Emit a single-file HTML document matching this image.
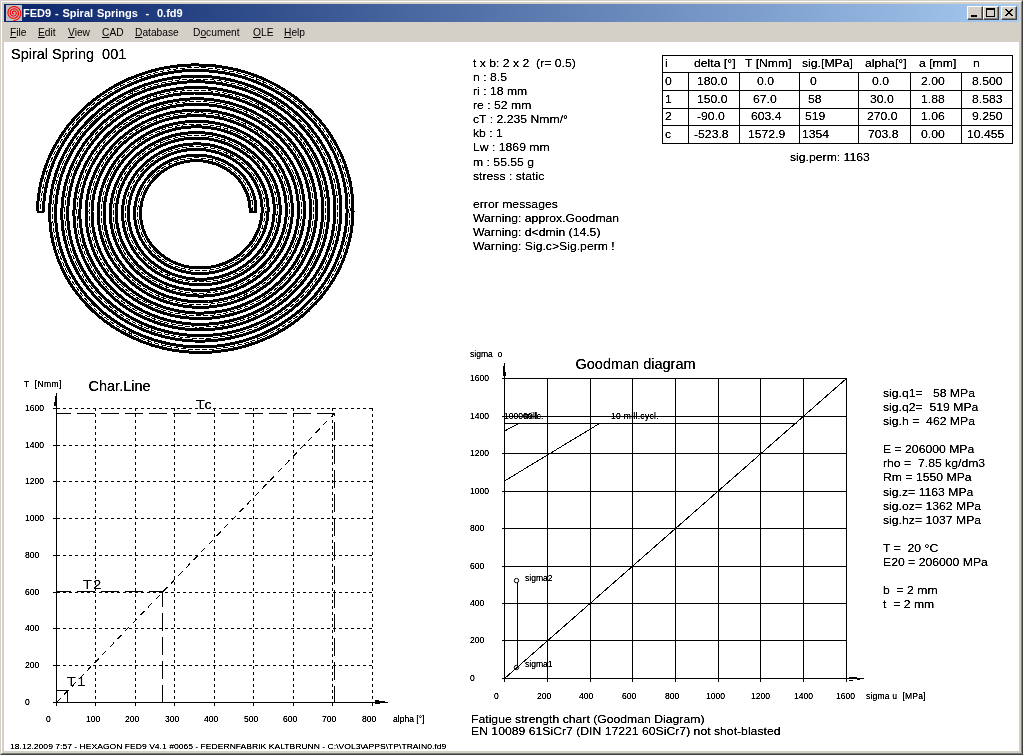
<!DOCTYPE html>
<html><head><meta charset="utf-8"><title>FED9 - Spiral Springs - 0.fd9</title>
<style>
html,body{margin:0;padding:0;}
body{width:1023px;height:755px;overflow:hidden;background:#d4d0c8;font-family:"Liberation Sans", sans-serif;position:relative;}
#win{position:absolute;left:0;top:0;width:1023px;height:755px;box-sizing:border-box;background:#d4d0c8;
 border-top:1px solid #d4d0c8;border-left:1px solid #d4d0c8;border-right:1px solid #404040;border-bottom:1px solid #404040;}
#win2{position:absolute;left:1px;top:1px;width:1021px;height:753px;box-sizing:border-box;
 border-top:1px solid #fff;border-left:1px solid #fff;border-right:1px solid #808080;border-bottom:1px solid #808080;}
#title{position:absolute;left:4px;top:4px;width:1015px;height:18px;background:linear-gradient(to right,#0a246a,#a6caf0);}
#title .cap{position:absolute;left:19px;top:0;height:18px;line-height:18px;font-size:11px;font-weight:bold;color:#fff;white-space:pre;letter-spacing:0;word-spacing:0.8px;}
.btn{position:absolute;top:2px;width:16px;height:14px;box-sizing:border-box;background:#d4d0c8;
 border-top:1px solid #fff;border-left:1px solid #fff;border-right:1px solid #404040;border-bottom:1px solid #404040;}
.btn i{position:absolute;left:0;top:0;right:0;bottom:0;border-right:1px solid #808080;border-bottom:1px solid #808080;}
#menu{position:absolute;left:4px;top:23px;width:1015px;height:19px;font-size:11px;line-height:19px;color:#000;}
#menu span{position:absolute;top:0;transform:scaleX(0.93);transform-origin:0 50%;}
#menu u{text-decoration:underline;}
#client{position:absolute;left:4px;top:42px;width:1015px;height:709px;background:#fff;}
#cv{position:absolute;left:0;top:0;width:1023px;height:755px;}
.t{position:absolute;white-space:nowrap;color:#000;transform-origin:0 50%;}
.sm{font-weight:normal;}
.ft{font-weight:normal;}
#tx{position:absolute;left:0;top:0;width:1023px;height:755px;will-change:transform;filter:url(#thr);}
#title,#menu{will-change:transform;}
svg{position:absolute;left:0;top:0;}
svg *{shape-rendering:crispEdges;}
svg .aa{shape-rendering:auto;}
</style></head><body>
<div id="win"></div><div id="win2"></div>
<div id="title">
 <svg width="16" height="16" style="left:2px;top:1px" viewBox="0 0 16 16"><rect width="16" height="16" fill="#c0c0c0"/>
 <path d="M7.80 8.80 L7.67 8.85 L7.52 8.87 L7.36 8.86 L7.20 8.83 L7.04 8.76 L6.88 8.67 L6.74 8.54 L6.61 8.39 L6.51 8.20 L6.44 8.00 L6.40 7.78 L6.40 7.55 L6.44 7.31 L6.52 7.07 L6.64 6.84 L6.80 6.63 L7.01 6.44 L7.24 6.28 L7.51 6.16 L7.80 6.08 L8.11 6.05 L8.43 6.07 L8.75 6.14 L9.06 6.27 L9.35 6.45 L9.62 6.68 L9.86 6.95 L10.05 7.27 L10.19 7.62 L10.28 8.00 L10.30 8.40 L10.26 8.80 L10.15 9.20 L9.98 9.59 L9.75 9.95 L9.45 10.27 L9.10 10.55 L8.70 10.78 L8.27 10.94 L7.80 11.03 L7.32 11.05 L6.83 10.99 L6.35 10.85 L5.89 10.63 L5.46 10.34 L5.07 9.98 L4.75 9.55 L4.49 9.08 L4.31 8.55 L4.21 8.00 L4.20 7.43 L4.28 6.86 L4.45 6.29 L4.71 5.76 L5.06 5.26 L5.49 4.82 L5.99 4.45 L6.55 4.16 L7.16 3.96 L7.80 3.85 L8.46 3.85 L9.12 3.95 L9.76 4.15 L10.37 4.46 L10.93 4.87 L11.43 5.36 L11.85 5.94 L12.17 6.58 L12.40 7.27 L12.51 8.00 L12.51 8.75 L12.38 9.49 L12.14 10.21 L11.79 10.90 L11.33 11.53 L10.76 12.08 L10.11 12.54 L9.39 12.90 L8.62 13.15 L7.80 13.27 L6.97 13.26 L6.14 13.12 L5.33 12.84 L4.57 12.44 L3.88 11.92 L3.27 11.29 L2.76 10.57 L2.37 9.77 L2.10 8.90 L1.97 8.00 L1.99 7.08 L2.15 6.17 L2.46 5.28 L2.91 4.44 L3.48 3.68 L4.18 3.02 L4.98 2.46 L5.86 2.04 L6.81 1.75 L7.80 1.62 L8.81 1.64 L9.81 1.82 L10.77 2.16 L11.68 2.66 L12.51 3.29 L13.24 4.05 L13.84 4.92 L14.30 5.89 L14.60 6.92 L14.74 8.00 L14.71 9.09 L14.51 10.18 L14.13 11.23 L13.60 12.21 L12.91 13.11 L12.08 13.89 L11.13 14.53 L10.08 15.03 L8.96 15.35 L7.80 15.50" fill="none" stroke="#f00" stroke-width="1.15" stroke-linecap="round" style="shape-rendering:auto"/></svg>
 <div class="cap">FED9 - Spiral Springs  -  0.fd9</div>
 <div class="btn" style="left:963px"><i></i><svg width="14" height="12"><rect x="3" y="8" width="6" height="2" fill="#000"/></svg></div>
 <div class="btn" style="left:979px"><i></i><svg width="14" height="12"><rect x="2.5" y="1.5" width="8" height="8" fill="none" stroke="#000"/><rect x="2" y="1" width="9" height="2" fill="#000"/></svg></div>
 <div class="btn" style="left:997px"><i></i><svg width="14" height="12"><path d="M3 2 L10 9 M4 2 L11 9 M10 2 L3 9 M11 2 L4 9" stroke="#000" stroke-width="1" fill="none" style="shape-rendering:auto"/></svg></div>
</div>
<div id="menu">
 <span style="left:6px"><u>F</u>ile</span><span style="left:34px"><u>E</u>dit</span><span style="left:64px"><u>V</u>iew</span>
 <span style="left:98px"><u>C</u>AD</span><span style="left:131px"><u>D</u>atabase</span><span style="left:189px">D<u>o</u>cument</span>
 <span style="left:249px"><u>O</u>LE</span><span style="left:280px"><u>H</u>elp</span>
</div>
<div id="client"></div>
<svg width="0" height="0" style="position:absolute"><defs><filter id="thr" x="0" y="0" width="100%" height="100%" color-interpolation-filters="sRGB"><feComponentTransfer><feFuncA type="linear" slope="1.8" intercept="-0.15"/></feComponentTransfer></filter></defs></svg>
<svg id="cv" width="1023" height="755" viewBox="0 0 1023 755">
<path d="M250.0 211.5 L250.0 208.1 L249.7 204.8 L249.2 201.4 L248.5 198.1 L247.5 194.9 L246.2 191.7 L244.7 188.6 L243.0 185.5 L241.1 182.6 L238.9 179.8 L236.5 177.2 L233.9 174.7 L231.2 172.4 L228.2 170.3 L225.1 168.3 L221.9 166.6 L218.5 165.0 L215.0 163.7 L211.4 162.6 L207.7 161.8 L204.0 161.1 L200.2 160.8 L196.4 160.7 L192.6 160.8 L188.7 161.1 L185.0 161.8 L181.2 162.6 L177.5 163.7 L173.9 165.1 L170.4 166.7 L167.1 168.5 L163.8 170.5 L160.8 172.8 L157.8 175.2 L155.1 177.8 L152.6 180.6 L150.3 183.6 L148.2 186.7 L146.3 190.0 L144.7 193.4 L143.3 196.9 L142.2 200.4 L141.4 204.1 L140.8 207.8 L140.6 211.5 L140.6 215.3 L140.9 219.0 L141.4 222.7 L142.3 226.4 L143.4 230.1 L144.8 233.6 L146.5 237.1 L148.4 240.5 L150.6 243.7 L153.0 246.8 L155.7 249.7 L158.6 252.5 L161.7 255.0 L165.0 257.4 L168.4 259.6 L172.0 261.5 L175.8 263.2 L179.7 264.7 L183.7 265.9 L187.8 266.8 L192.0 267.5 L196.2 267.9 L200.4 268.0 L204.7 267.8 L208.9 267.4 L213.1 266.7 L217.3 265.7 L221.3 264.5 L225.3 263.0 L229.2 261.2 L232.9 259.2 L236.5 256.9 L239.9 254.4 L243.1 251.7 L246.1 248.8 L248.9 245.7 L251.5 242.4 L253.8 238.9 L255.8 235.3 L257.6 231.6 L259.1 227.7 L260.3 223.7 L261.2 219.7 L261.8 215.6 L262.1 211.5 L262.1 207.4 L261.7 203.2 L261.1 199.1 L260.1 195.0 L258.9 191.0 L257.3 187.1 L255.5 183.3 L253.3 179.6 L250.9 176.0 L248.2 172.6 L245.3 169.4 L242.1 166.3 L238.7 163.5 L235.0 160.9 L231.2 158.5 L227.2 156.4 L223.1 154.6 L218.8 153.0 L214.4 151.7 L209.8 150.7 L205.3 149.9 L200.6 149.5 L196.0 149.4 L191.3 149.6 L186.6 150.0 L182.0 150.8 L177.5 151.9 L173.0 153.3 L168.6 155.0 L164.4 156.9 L160.3 159.1 L156.4 161.6 L152.6 164.4 L149.1 167.4 L145.8 170.6 L142.8 174.0 L140.0 177.6 L137.4 181.4 L135.2 185.4 L133.3 189.5 L131.7 193.7 L130.4 198.1 L129.4 202.5 L128.7 207.0 L128.4 211.5 L128.5 216.0 L128.8 220.6 L129.6 225.1 L130.6 229.5 L132.0 233.9 L133.7 238.2 L135.8 242.4 L138.1 246.4 L140.8 250.3 L143.7 254.0 L147.0 257.6 L150.5 260.9 L154.2 263.9 L158.2 266.8 L162.4 269.3 L166.7 271.6 L171.3 273.7 L176.0 275.4 L180.8 276.8 L185.7 277.9 L190.7 278.7 L195.8 279.1 L200.8 279.3 L205.9 279.1 L211.0 278.5 L216.1 277.6 L221.0 276.5 L225.9 274.9 L230.6 273.1 L235.3 271.0 L239.7 268.5 L244.0 265.8 L248.0 262.8 L251.9 259.6 L255.4 256.0 L258.8 252.3 L261.8 248.4 L264.5 244.2 L266.9 239.9 L269.0 235.4 L270.8 230.8 L272.2 226.1 L273.2 221.3 L273.9 216.4 L274.2 211.5 L274.2 206.6 L273.8 201.6 L273.0 196.8 L271.8 191.9 L270.3 187.2 L268.4 182.5 L266.2 178.0 L263.6 173.6 L260.7 169.4 L257.5 165.3 L254.0 161.5 L250.2 157.9 L246.1 154.6 L241.8 151.6 L237.3 148.8 L232.5 146.3 L227.6 144.1 L222.5 142.3 L217.3 140.7 L212.0 139.5 L206.5 138.7 L201.1 138.2 L195.5 138.1 L190.0 138.3 L184.5 138.9 L179.1 139.9 L173.7 141.2 L168.4 142.8 L163.3 144.8 L158.3 147.1 L153.5 149.8 L148.9 152.7 L144.5 156.0 L140.4 159.5 L136.5 163.3 L132.9 167.4 L129.7 171.7 L126.7 176.1 L124.1 180.8 L121.9 185.7 L120.0 190.6 L118.5 195.7 L117.4 200.9 L116.6 206.2 L116.3 211.5 L116.4 216.8 L116.8 222.1 L117.7 227.4 L119.0 232.6 L120.6 237.8 L122.6 242.8 L125.1 247.7 L127.8 252.4 L131.0 257.0 L134.4 261.3 L138.2 265.4 L142.3 269.2 L146.7 272.8 L151.4 276.1 L156.3 279.1 L161.4 281.8 L166.7 284.1 L172.2 286.1 L177.8 287.7 L183.6 289.0 L189.4 289.9 L195.3 290.4 L201.3 290.5 L207.2 290.3 L213.1 289.6 L219.0 288.6 L224.8 287.2 L230.4 285.4 L236.0 283.3 L241.3 280.7 L246.5 277.9 L251.4 274.7 L256.2 271.2 L260.6 267.4 L264.7 263.3 L268.6 258.9 L272.1 254.3 L275.2 249.5 L278.0 244.5 L280.4 239.3 L282.4 233.9 L284.1 228.4 L285.3 222.9 L286.0 217.2 L286.4 211.5 L286.3 205.8 L285.8 200.1 L284.8 194.4 L283.5 188.8 L281.7 183.3 L279.5 177.9 L276.9 172.7 L273.9 167.6 L270.5 162.7 L266.8 158.1 L262.7 153.7 L258.3 149.6 L253.6 145.7 L248.6 142.2 L243.3 139.0 L237.9 136.1 L232.2 133.6 L226.3 131.5 L220.2 129.8 L214.1 128.4 L207.8 127.5 L201.5 127.0 L195.1 126.8 L188.8 127.1 L182.4 127.8 L176.1 128.9 L170.0 130.5 L163.9 132.4 L158.0 134.7 L152.2 137.4 L146.7 140.4 L141.4 143.9 L136.4 147.6 L131.6 151.7 L127.2 156.1 L123.1 160.7 L119.4 165.7 L116.0 170.8 L113.0 176.2 L110.5 181.8 L108.3 187.5 L106.6 193.4 L105.3 199.4 L104.5 205.4 L104.2 211.5 L104.2 217.6 L104.8 223.7 L105.8 229.8 L107.3 235.7 L109.2 241.6 L111.6 247.4 L114.3 253.0 L117.5 258.4 L121.2 263.6 L125.1 268.5 L129.5 273.2 L134.2 277.6 L139.3 281.7 L144.6 285.5 L150.2 288.9 L156.1 291.9 L162.2 294.6 L168.5 296.8 L174.9 298.7 L181.5 300.1 L188.2 301.1 L194.9 301.7 L201.7 301.8 L208.5 301.5 L215.2 300.7 L221.9 299.5 L228.5 297.9 L235.0 295.9 L241.3 293.4 L247.4 290.5 L253.3 287.2 L258.9 283.6 L264.3 279.6 L269.3 275.2 L274.0 270.5 L278.4 265.6 L282.4 260.3 L286.0 254.8 L289.1 249.1 L291.8 243.1 L294.1 237.0 L295.9 230.8 L297.3 224.4 L298.1 218.0 L298.5 211.5 L298.4 205.0 L297.8 198.5 L296.7 192.1 L295.2 185.7 L293.1 179.4 L290.6 173.3 L287.6 167.4 L284.2 161.6 L280.4 156.1 L276.1 150.8 L271.5 145.9 L266.4 141.2 L261.1 136.8 L255.4 132.8 L249.4 129.2 L243.2 126.0 L236.7 123.2 L230.0 120.8 L223.2 118.8 L216.2 117.3 L209.1 116.3 L201.9 115.7 L194.7 115.6 L187.5 115.9 L180.3 116.7 L173.2 118.0 L166.2 119.7 L159.3 121.9 L152.7 124.5 L146.2 127.6 L139.9 131.1 L133.9 135.0 L128.3 139.2 L122.9 143.9 L117.9 148.8 L113.3 154.1 L109.1 159.7 L105.3 165.5 L101.9 171.6 L99.1 177.9 L96.7 184.4 L94.7 191.0 L93.3 197.8 L92.4 204.6 L92.0 211.5 L92.1 218.4 L92.8 225.3 L93.9 232.1 L95.6 238.9 L97.8 245.5 L100.5 252.0 L103.6 258.3 L107.2 264.4 L111.3 270.2 L115.8 275.8 L120.8 281.1 L126.1 286.0 L131.8 290.6 L137.8 294.8 L144.1 298.7 L150.8 302.1 L157.6 305.0 L164.7 307.6 L172.0 309.6 L179.4 311.2 L186.9 312.3 L194.5 313.0 L202.1 313.1 L209.7 312.7 L217.3 311.8 L224.9 310.5 L232.3 308.6 L239.5 306.3 L246.6 303.5 L253.5 300.3 L260.1 296.6 L266.4 292.5 L272.4 288.0 L278.1 283.1 L283.3 277.8 L288.2 272.2 L292.7 266.3 L296.7 260.1 L300.2 253.7 L303.2 247.0 L305.8 240.1 L307.8 233.1 L309.3 226.0 L310.2 218.8 L310.7 211.5 L310.5 204.2 L309.8 196.9 L308.6 189.7 L306.8 182.6 L304.5 175.6 L301.7 168.7 L298.3 162.1 L294.5 155.6 L290.2 149.5 L285.4 143.6 L280.2 138.0 L274.6 132.8 L268.6 128.0 L262.2 123.5 L255.5 119.5 L248.5 115.9 L241.2 112.7 L233.8 110.1 L226.1 107.9 L218.3 106.2 L210.3 105.1 L202.3 104.4 L194.3 104.3 L186.2 104.7 L178.2 105.6 L170.3 107.0 L162.5 109.0 L154.8 111.5 L147.3 114.4 L140.1 117.8 L133.1 121.7 L126.5 126.1 L120.1 130.8 L114.2 136.0 L108.6 141.6 L103.5 147.5 L98.8 153.7 L94.6 160.3 L90.9 167.1 L87.7 174.1 L85.0 181.3 L82.9 188.7 L81.3 196.2 L80.3 203.8 L79.9 211.5 L80.0 219.2 L80.8 226.8 L82.1 234.5 L83.9 242.0 L86.4 249.3 L89.4 256.6 L92.9 263.6 L97.0 270.3 L101.5 276.8 L106.5 283.0 L112.0 288.9 L118.0 294.4 L124.3 299.5 L131.0 304.2 L138.1 308.4 L145.4 312.2 L153.1 315.5 L161.0 318.3 L169.0 320.6 L177.3 322.3 L185.6 323.6 L194.1 324.2 L202.5 324.4 L211.0 323.9 L219.4 323.0 L227.8 321.4 L236.0 319.4 L244.1 316.8 L251.9 313.7 L259.5 310.1 L266.9 305.9 L273.9 301.4 L280.5 296.3 L286.8 290.9 L292.6 285.0 L298.0 278.8 L303.0 272.3 L307.4 265.4 L311.3 258.2 L314.7 250.8 L317.5 243.2 L319.7 235.5 L321.3 227.6 L322.4 219.6 L322.8 211.5 L322.6 203.4 L321.9 195.4 L320.5 187.4 L318.5 179.5 L315.9 171.7 L312.8 164.1 L309.1 156.8 L304.8 149.7 L300.0 142.8 L294.7 136.3 L288.9 130.2 L282.7 124.4 L276.0 119.1 L269.0 114.1 L261.6 109.7 L253.8 105.7 L245.8 102.3 L237.5 99.3 L229.0 96.9 L220.4 95.1 L211.6 93.8 L202.7 93.1 L193.8 93.0 L184.9 93.5 L176.1 94.5 L167.3 96.1 L158.7 98.3 L150.2 101.0 L142.0 104.3 L134.0 108.1 L126.3 112.4 L119.0 117.2 L112.0 122.5 L105.4 128.2 L99.3 134.3 L93.7 140.9 L88.5 147.7 L83.9 155.0 L79.8 162.5 L76.2 170.2 L73.3 178.2 L71.0 186.4 L69.3 194.7 L68.2 203.0 L67.7 211.5 L67.9 220.0 L68.7 228.4 L70.2 236.8 L72.3 245.1 L75.0 253.2 L78.3 261.1 L82.2 268.9 L86.7 276.3 L91.7 283.5 L97.2 290.3 L103.3 296.7 L109.9 302.8 L116.8 308.4 L124.2 313.5 L132.0 318.2 L140.1 322.3 L148.5 326.0 L157.2 329.0 L166.1 331.5 L175.2 333.4 L184.4 334.8 L193.6 335.5 L203.0 335.6 L212.3 335.1 L221.6 334.1 L230.7 332.4 L239.8 330.1 L248.6 327.2 L257.3 323.8 L265.6 319.8 L273.6 315.3 L281.3 310.3 L288.6 304.7 L295.5 298.7 L301.9 292.3 L307.9 285.5 L313.3 278.2 L318.1 270.7 L322.4 262.8 L326.1 254.7 L329.1 246.4 L331.6 237.8 L333.3 229.1 L334.5 220.3 L334.9 211.5 L334.7 202.6 L333.9 193.8 L332.3 185.0 L330.2 176.4 L327.3 167.9 L323.9 159.6 L319.8 151.5 L315.1 143.7 L309.8 136.2 L304.0 129.1 L297.7 122.4 L290.8 116.0 L283.5 110.2 L275.8 104.8 L267.6 99.9 L259.1 95.6 L250.3 91.8 L241.3 88.6 L232.0 86.0 L222.5 84.0 L212.9 82.6 L203.2 81.9 L193.4 81.7 L183.7 82.2 L174.0 83.4 L164.4 85.2 L155.0 87.5 L145.7 90.5 L136.7 94.1 L128.0 98.3 L119.6 103.0 L111.5 108.3 L103.9 114.1 L96.7 120.3 L90.0 127.1 L83.8 134.2 L78.2 141.8 L73.1 149.7 L68.7 157.9 L64.8 166.4 L61.6 175.1 L59.1 184.0 L57.3 193.1 L56.1 202.3 L55.6 211.5 L55.8 220.8 L56.7 230.0 L58.3 239.1 L60.6 248.2 L63.6 257.1 L67.2 265.7 L71.5 274.2 L76.4 282.3 L81.9 290.1 L87.9 297.5 L94.6 304.6 L101.7 311.2 L109.4 317.3 L117.4 322.9 L125.9 328.0 L134.8 332.5 L144.0 336.4 L153.5 339.8 L163.2 342.5 L173.1 344.6 L183.1 346.0 L193.2 346.8 L203.4 346.9 L213.6 346.4 L223.7 345.2 L233.7 343.3 L243.5 340.8 L253.2 337.7 L262.6 333.9 L271.7 329.6 L280.4 324.6 L288.8 319.1 L296.8 313.1 L304.3 306.6 L311.2 299.6 L317.7 292.1 L323.6 284.2 L328.8 276.0 L333.5 267.4 L337.5 258.6 L340.8 249.5 L343.4 240.2 L345.4 230.7 L346.6 221.1 L347.1 211.5 L346.8 201.8 L345.9 192.2 L344.2 182.7 L341.8 173.3 L338.7 164.0 L335.0 155.0 L330.5 146.2 L325.4 137.7 L319.6 129.6 L313.3 121.8 L306.4 114.5 L298.9 107.7 L291.0 101.3 L282.6 95.4 L273.7 90.2 L264.5 85.5 L254.9 81.4 L245.0 77.9 L234.9 75.1 L224.6 72.9 L214.1 71.4 L203.6 70.6 L193.0 70.5 L182.4 71.0 L171.9 72.3 L161.5 74.2 L151.2 76.8 L141.2 80.1 L131.4 84.0 L121.9 88.5 L112.8 93.7 L104.0 99.4 L95.8 105.7 L88.0 112.5 L80.7 119.8 L74.0 127.6 L67.9 135.8 L62.4 144.4 L57.6 153.3 L53.4 162.5 L50.0 172.0 L47.2 181.7 L45.2 191.5 L44.0 201.5 L43.5 211.5" fill="none" stroke="#000" stroke-width="3" stroke-linejoin="round"/>
<path d="M255.9 211.5 L255.9 207.8 L255.6 204.0 L255.0 200.3 L254.2 196.6 L253.1 193.0 L251.7 189.4 L250.0 186.0 L248.1 182.6 L245.9 179.4 L243.5 176.3 L240.8 173.4 L237.9 170.6 L234.8 168.0 L231.6 165.7 L228.1 163.5 L224.5 161.6 L220.7 159.9 L216.9 158.5 L212.9 157.3 L208.8 156.3 L204.6 155.7 L200.4 155.3 L196.2 155.1 L191.9 155.3 L187.7 155.7 L183.5 156.4 L179.4 157.4 L175.3 158.6 L171.3 160.1 L167.5 161.9 L163.7 163.9 L160.2 166.2 L156.8 168.7 L153.6 171.4 L150.6 174.3 L147.8 177.4 L145.2 180.7 L142.9 184.1 L140.9 187.7 L139.1 191.5 L137.6 195.3 L136.4 199.3 L135.5 203.3 L134.9 207.4 L134.6 211.5 L134.6 215.6 L135.0 219.8 L135.6 223.9 L136.6 227.9 L137.8 231.9 L139.4 235.9 L141.2 239.7 L143.4 243.4 L145.8 246.9 L148.5 250.3 L151.4 253.6 L154.6 256.6 L158.0 259.4 L161.6 262.0 L165.5 264.4 L169.4 266.5 L173.6 268.3 L177.9 269.9 L182.3 271.2 L186.8 272.2 L191.3 273.0 L196.0 273.4 L200.6 273.5 L205.3 273.3 L209.9 272.9 L214.6 272.1 L219.1 271.0 L223.6 269.6 L227.9 267.9 L232.2 266.0 L236.2 263.8 L240.2 261.3 L243.9 258.5 L247.4 255.6 L250.7 252.3 L253.7 248.9 L256.5 245.3 L259.0 241.5 L261.3 237.6 L263.2 233.4 L264.8 229.2 L266.1 224.9 L267.1 220.5 L267.7 216.0 L268.0 211.5 L268.0 207.0 L267.6 202.4 L266.9 197.9 L265.9 193.5 L264.5 189.1 L262.8 184.8 L260.7 180.7 L258.4 176.6 L255.7 172.7 L252.8 169.0 L249.5 165.5 L246.1 162.2 L242.3 159.2 L238.4 156.3 L234.2 153.8 L229.8 151.5 L225.3 149.4 L220.6 147.7 L215.8 146.3 L210.9 145.2 L205.9 144.4 L200.8 144.0 L195.8 143.9 L190.7 144.1 L185.6 144.6 L180.6 145.5 L175.6 146.6 L170.8 148.2 L166.0 150.0 L161.4 152.1 L157.0 154.6 L152.7 157.3 L148.7 160.3 L144.8 163.5 L141.3 167.0 L137.9 170.8 L134.9 174.7 L132.2 178.8 L129.8 183.2 L127.7 187.6 L125.9 192.2 L124.5 196.9 L123.5 201.7 L122.8 206.6 L122.5 211.5 L122.5 216.4 L123.0 221.3 L123.7 226.2 L124.9 231.1 L126.4 235.8 L128.3 240.5 L130.5 245.0 L133.1 249.4 L136.0 253.6 L139.2 257.6 L142.7 261.4 L146.5 265.0 L150.5 268.3 L154.8 271.4 L159.4 274.1 L164.1 276.6 L169.0 278.8 L174.1 280.6 L179.3 282.2 L184.7 283.3 L190.1 284.2 L195.6 284.7 L201.1 284.8 L206.6 284.5 L212.1 284.0 L217.5 283.0 L222.9 281.7 L228.1 280.1 L233.2 278.1 L238.2 275.8 L243.0 273.1 L247.6 270.2 L252.0 266.9 L256.1 263.4 L260.0 259.6 L263.6 255.6 L266.8 251.3 L269.8 246.8 L272.4 242.1 L274.6 237.3 L276.5 232.3 L278.0 227.2 L279.1 222.1 L279.9 216.8 L280.2 211.5 L280.1 206.2 L279.7 200.9 L278.8 195.6 L277.5 190.4 L275.9 185.3 L273.8 180.2 L271.4 175.4 L268.7 170.7 L265.5 166.1 L262.1 161.8 L258.3 157.7 L254.2 153.8 L249.8 150.3 L245.1 147.0 L240.3 144.0 L235.1 141.3 L229.8 139.0 L224.4 137.0 L218.7 135.4 L213.0 134.1 L207.2 133.2 L201.3 132.7 L195.3 132.6 L189.4 132.8 L183.5 133.5 L177.6 134.5 L171.9 135.9 L166.2 137.7 L160.7 139.8 L155.3 142.4 L150.2 145.2 L145.2 148.4 L140.5 151.9 L136.1 155.7 L132.0 159.8 L128.1 164.1 L124.6 168.7 L121.5 173.5 L118.7 178.6 L116.3 183.8 L114.3 189.1 L112.7 194.6 L111.5 200.2 L110.7 205.8 L110.3 211.5 L110.4 217.2 L110.9 222.9 L111.9 228.6 L113.2 234.2 L115.0 239.7 L117.2 245.0 L119.8 250.3 L122.8 255.3 L126.2 260.2 L129.9 264.8 L134.0 269.2 L138.4 273.4 L143.1 277.2 L148.1 280.7 L153.3 283.9 L158.8 286.8 L164.5 289.2 L170.4 291.4 L176.4 293.1 L182.6 294.5 L188.8 295.4 L195.1 295.9 L201.5 296.1 L207.8 295.8 L214.2 295.1 L220.4 294.0 L226.6 292.4 L232.7 290.5 L238.6 288.2 L244.3 285.5 L249.8 282.5 L255.1 279.1 L260.1 275.3 L264.9 271.2 L269.3 266.9 L273.4 262.2 L277.1 257.3 L280.5 252.1 L283.5 246.7 L286.0 241.2 L288.2 235.4 L289.9 229.6 L291.1 223.6 L292.0 217.6 L292.3 211.5 L292.2 205.4 L291.7 199.3 L290.7 193.3 L289.2 187.3 L287.3 181.4 L284.9 175.7 L282.2 170.1 L279.0 164.7 L275.3 159.5 L271.4 154.5 L267.0 149.9 L262.3 145.5 L257.3 141.4 L251.9 137.6 L246.3 134.2 L240.5 131.2 L234.4 128.5 L228.1 126.3 L221.7 124.4 L215.1 123.0 L208.4 122.0 L201.7 121.4 L194.9 121.3 L188.1 121.6 L181.4 122.4 L174.7 123.6 L168.1 125.2 L161.7 127.2 L155.4 129.7 L149.3 132.6 L143.4 135.9 L137.8 139.5 L132.4 143.5 L127.4 147.9 L122.7 152.5 L118.3 157.5 L114.3 162.7 L110.8 168.2 L107.6 174.0 L104.9 179.9 L102.6 186.0 L100.8 192.2 L99.4 198.6 L98.6 205.0 L98.2 211.5 L98.3 218.0 L98.9 224.5 L100.0 230.9 L101.6 237.3 L103.6 243.5 L106.1 249.6 L109.1 255.6 L112.5 261.3 L116.3 266.8 L120.6 272.1 L125.2 277.1 L130.2 281.7 L135.6 286.1 L141.3 290.1 L147.2 293.7 L153.5 296.9 L159.9 299.7 L166.6 302.1 L173.5 304.1 L180.5 305.6 L187.5 306.6 L194.7 307.2 L201.9 307.3 L209.1 307.0 L216.3 306.2 L223.4 304.9 L230.4 303.2 L237.2 301.0 L243.9 298.4 L250.4 295.3 L256.6 291.8 L262.6 287.9 L268.3 283.7 L273.6 279.1 L278.6 274.1 L283.2 268.8 L287.4 263.2 L291.2 257.4 L294.5 251.3 L297.4 245.0 L299.8 238.6 L301.7 231.9 L303.2 225.2 L304.1 218.4 L304.5 211.5 L304.3 204.6 L303.7 197.7 L302.5 190.9 L300.9 184.2 L298.7 177.5 L296.0 171.1 L292.9 164.8 L289.2 158.7 L285.2 152.9 L280.7 147.3 L275.7 142.0 L270.4 137.1 L264.7 132.5 L258.7 128.3 L252.4 124.4 L245.8 121.0 L238.9 118.1 L231.9 115.5 L224.6 113.5 L217.2 111.9 L209.7 110.8 L202.1 110.2 L194.5 110.0 L186.9 110.4 L179.3 111.3 L171.8 112.6 L164.4 114.5 L157.1 116.8 L150.0 119.6 L143.2 122.8 L136.6 126.5 L130.3 130.6 L124.3 135.1 L118.6 140.0 L113.4 145.3 L108.5 150.9 L104.0 156.8 L100.0 163.0 L96.5 169.4 L93.5 176.0 L90.9 182.9 L88.9 189.9 L87.4 197.0 L86.5 204.2 L86.1 211.5 L86.2 218.8 L86.9 226.0 L88.1 233.3 L89.9 240.4 L92.2 247.4 L95.0 254.2 L98.4 260.9 L102.2 267.3 L106.5 273.5 L111.3 279.3 L116.5 284.9 L122.1 290.1 L128.1 295.0 L134.5 299.4 L141.2 303.4 L148.2 307.0 L155.4 310.2 L162.9 312.8 L170.5 315.0 L178.3 316.7 L186.3 317.8 L194.3 318.5 L202.3 318.6 L210.4 318.2 L218.4 317.3 L226.3 315.8 L234.1 313.9 L241.8 311.4 L249.2 308.5 L256.4 305.1 L263.4 301.2 L270.1 296.8 L276.4 292.1 L282.3 286.9 L287.9 281.4 L293.0 275.4 L297.7 269.2 L301.9 262.7 L305.6 255.9 L308.8 248.9 L311.5 241.7 L313.6 234.3 L315.2 226.8 L316.2 219.2 L316.6 211.5 L316.5 203.8 L315.7 196.2 L314.4 188.6 L312.5 181.1 L310.1 173.7 L307.1 166.5 L303.6 159.5 L299.5 152.7 L295.0 146.2 L290.0 140.0 L284.5 134.2 L278.5 128.7 L272.2 123.6 L265.5 118.9 L258.5 114.7 L251.1 110.9 L243.5 107.6 L235.6 104.8 L227.5 102.5 L219.3 100.8 L211.0 99.6 L202.5 98.9 L194.1 98.8 L185.6 99.2 L177.2 100.2 L168.8 101.7 L160.6 103.7 L152.6 106.3 L144.7 109.4 L137.1 113.0 L129.8 117.1 L122.8 121.7 L116.2 126.7 L109.9 132.2 L104.1 138.0 L98.7 144.2 L93.7 150.8 L89.3 157.7 L85.4 164.8 L82.1 172.2 L79.3 179.8 L77.0 187.6 L75.4 195.5 L74.4 203.4 L73.9 211.5 L74.1 219.6 L74.9 227.6 L76.2 235.6 L78.2 243.5 L80.8 251.2 L83.9 258.8 L87.7 266.2 L91.9 273.3 L96.7 280.1 L102.0 286.6 L107.8 292.7 L114.0 298.5 L120.6 303.8 L127.7 308.8 L135.1 313.2 L142.8 317.2 L150.8 320.6 L159.1 323.6 L167.6 325.9 L176.2 327.8 L185.0 329.0 L193.9 329.7 L202.7 329.9 L211.6 329.4 L220.5 328.4 L229.2 326.8 L237.9 324.6 L246.3 321.9 L254.5 318.6 L262.5 314.8 L270.2 310.5 L277.5 305.7 L284.5 300.5 L291.1 294.7 L297.2 288.6 L302.8 282.1 L308.0 275.2 L312.6 268.0 L316.7 260.5 L320.2 252.7 L323.2 244.8 L325.5 236.6 L327.2 228.3 L328.3 219.9 L328.7 211.5 L328.6 203.0 L327.7 194.6 L326.3 186.2 L324.2 178.0 L321.5 169.8 L318.2 161.9 L314.3 154.2 L309.8 146.7 L304.8 139.6 L299.3 132.8 L293.2 126.3 L286.7 120.3 L279.7 114.7 L272.3 109.6 L264.5 104.9 L256.4 100.8 L248.0 97.1 L239.4 94.1 L230.5 91.6 L221.4 89.7 L212.2 88.3 L203.0 87.6 L193.6 87.5 L184.3 88.0 L175.1 89.1 L165.9 90.7 L156.9 93.0 L148.0 95.9 L139.4 99.3 L131.1 103.3 L123.0 107.8 L115.3 112.8 L108.0 118.4 L101.2 124.3 L94.8 130.8 L88.8 137.6 L83.4 144.8 L78.6 152.4 L74.3 160.2 L70.7 168.3 L67.6 176.7 L65.2 185.2 L63.4 193.9 L62.3 202.7 L61.8 211.5 L62.0 220.4 L62.8 229.2 L64.4 238.0 L66.6 246.6 L69.4 255.1 L72.8 263.4 L76.9 271.5 L81.6 279.2 L86.9 286.7 L92.7 293.8 L99.0 300.6 L105.9 306.9 L113.2 312.7 L120.9 318.1 L129.0 323.0 L137.5 327.3 L146.3 331.1 L155.4 334.3 L164.7 336.9 L174.1 338.9 L183.7 340.3 L193.4 341.0 L203.2 341.1 L212.9 340.6 L222.6 339.5 L232.2 337.7 L241.6 335.4 L250.9 332.4 L259.9 328.8 L268.6 324.6 L277.0 319.9 L285.0 314.6 L292.6 308.8 L299.8 302.6 L306.5 295.9 L312.7 288.7 L318.3 281.2 L323.4 273.3 L327.8 265.1 L331.7 256.6 L334.8 247.9 L337.4 239.0 L339.2 229.9 L340.4 220.7 L340.9 211.5 L340.7 202.2 L339.8 193.0 L338.2 183.9 L335.9 174.8 L332.9 166.0 L329.3 157.3 L325.0 148.9 L320.1 140.8 L314.6 133.0 L308.6 125.5 L301.9 118.5 L294.8 111.9 L287.2 105.8 L279.1 100.2 L270.6 95.1 L261.8 90.6 L252.6 86.7 L243.1 83.4 L233.4 80.6 L223.5 78.6 L213.5 77.1 L203.4 76.3 L193.2 76.2 L183.1 76.8 L173.0 77.9 L163.0 79.8 L153.1 82.3 L143.5 85.4 L134.1 89.2 L125.0 93.5 L116.2 98.4 L107.9 103.9 L99.9 110.0 L92.4 116.5 L85.5 123.5 L79.0 131.0 L73.1 138.8 L67.9 147.1 L63.2 155.6 L59.2 164.5 L55.9 173.6 L53.3 182.9 L51.4 192.3 L50.1 201.9 L49.6 211.5 L49.9 221.1 L50.8 230.8 L52.5 240.3 L54.9 249.7 L58.0 259.0 L61.8 268.0 L66.2 276.8 L71.3 285.2 L77.1 293.4 L83.4 301.1 L90.3 308.4 L97.7 315.3 L105.7 321.6 L114.1 327.5 L123.0 332.7 L132.2 337.4 L141.8 341.5 L151.6 345.0 L161.7 347.8 L172.0 350.0 L182.5 351.5 L193.0 352.3 L203.6 352.4 L214.2 351.9 L224.7 350.6 L235.1 348.7 L245.4 346.1 L255.4 342.8 L265.2 338.9 L274.7 334.4 L283.8 329.2 L292.5 323.5 L300.7 317.2 L308.5 310.4 L315.8 303.1 L322.5 295.3 L328.6 287.2 L334.1 278.6 L338.9 269.7 L343.1 260.5 L346.5 251.0 L349.2 241.3 L351.3 231.5 L352.5 221.5 L353.0 211.5 L352.8 201.5 L351.8 191.5 L350.0 181.5 L347.5 171.7 L344.3 162.1 L340.4 152.7 L335.7 143.6 L330.4 134.8 L324.5 126.3 L317.9 118.3 L310.7 110.7 L302.9 103.5 L294.6 96.9 L285.9 90.9 L276.7 85.4 L267.1 80.5 L257.1 76.2 L246.9 72.6 L236.4 69.7 L225.6 67.5 L214.8 65.9 L203.8 65.1 L192.8 64.9 L181.8 65.5 L170.8 66.8 L160.0 68.8 L149.4 71.6 L138.9 75.0 L128.8 79.0 L118.9 83.7 L109.4 89.1 L100.4 95.1 L91.8 101.6 L83.7 108.7 L76.2 116.3 L69.2 124.3 L62.9 132.9 L57.2 141.8 L52.1 151.0 L47.8 160.6 L44.3 170.5 L41.4 180.5 L39.3 190.7 L38.0 201.1 L37.5 211.5" fill="none" stroke="#000" stroke-width="3" stroke-linejoin="round"/>
<path d="M252.9 211.5 L252.9 208.0 L252.7 204.4 L252.1 200.9 L251.3 197.4 L250.3 193.9 L248.9 190.5 L247.4 187.3 L245.5 184.1 L243.5 181.0 L241.2 178.1 L238.7 175.3 L235.9 172.7 L233.0 170.2 L229.9 168.0 L226.6 165.9 L223.2 164.1 L219.6 162.5 L215.9 161.1 L212.1 159.9 L208.3 159.0 L204.3 158.4 L200.3 158.0 L196.3 157.9 L192.3 158.0 L188.2 158.4 L184.2 159.1 L180.3 160.0 L176.4 161.2 L172.6 162.6 L169.0 164.3 L165.4 166.2 L162.0 168.3 L158.8 170.7 L155.7 173.3 L152.8 176.1 L150.2 179.0 L147.7 182.1 L145.5 185.4 L143.6 188.9 L141.9 192.4 L140.5 196.1 L139.3 199.9 L138.5 203.7 L137.9 207.6 L137.6 211.5 L137.6 215.4 L137.9 219.4 L138.5 223.3 L139.4 227.2 L140.6 231.0 L142.1 234.7 L143.9 238.4 L145.9 241.9 L148.2 245.3 L150.8 248.6 L153.6 251.6 L156.6 254.5 L159.8 257.2 L163.3 259.7 L166.9 262.0 L170.7 264.0 L174.7 265.8 L178.8 267.3 L183.0 268.5 L187.3 269.5 L191.7 270.2 L196.1 270.6 L200.5 270.7 L205.0 270.6 L209.4 270.1 L213.8 269.4 L218.2 268.4 L222.5 267.0 L226.6 265.5 L230.7 263.6 L234.6 261.5 L238.3 259.1 L241.9 256.5 L245.3 253.6 L248.4 250.6 L251.3 247.3 L254.0 243.8 L256.4 240.2 L258.6 236.4 L260.4 232.5 L262.0 228.5 L263.2 224.3 L264.2 220.1 L264.8 215.8 L265.1 211.5 L265.0 207.2 L264.7 202.8 L264.0 198.5 L263.0 194.3 L261.7 190.1 L260.0 186.0 L258.1 182.0 L255.8 178.1 L253.3 174.4 L250.5 170.8 L247.4 167.4 L244.1 164.3 L240.5 161.3 L236.7 158.6 L232.7 156.1 L228.5 153.9 L224.2 152.0 L219.7 150.4 L215.1 149.0 L210.4 147.9 L205.6 147.2 L200.7 146.7 L195.9 146.6 L191.0 146.8 L186.1 147.3 L181.3 148.1 L176.5 149.3 L171.9 150.7 L167.3 152.5 L162.9 154.5 L158.6 156.8 L154.5 159.5 L150.6 162.3 L147.0 165.4 L143.5 168.8 L140.4 172.4 L137.4 176.2 L134.8 180.1 L132.5 184.3 L130.5 188.6 L128.8 193.0 L127.4 197.5 L126.4 202.1 L125.8 206.8 L125.5 211.5 L125.5 216.2 L125.9 221.0 L126.7 225.6 L127.8 230.3 L129.2 234.9 L131.0 239.3 L133.2 243.7 L135.6 247.9 L138.4 251.9 L141.5 255.8 L144.8 259.5 L148.5 262.9 L152.4 266.1 L156.5 269.1 L160.9 271.7 L165.4 274.1 L170.2 276.2 L175.0 278.0 L180.1 279.5 L185.2 280.6 L190.4 281.4 L195.7 281.9 L201.0 282.0 L206.3 281.8 L211.5 281.2 L216.8 280.3 L221.9 279.1 L227.0 277.5 L231.9 275.6 L236.7 273.4 L241.4 270.8 L245.8 268.0 L250.0 264.9 L254.0 261.5 L257.7 257.8 L261.2 253.9 L264.3 249.8 L267.1 245.5 L269.6 241.0 L271.8 236.4 L273.6 231.6 L275.1 226.7 L276.2 221.7 L276.9 216.6 L277.2 211.5 L277.2 206.4 L276.7 201.3 L275.9 196.2 L274.7 191.2 L273.1 186.2 L271.1 181.4 L268.8 176.7 L266.1 172.1 L263.1 167.7 L259.8 163.6 L256.1 159.6 L252.2 155.9 L248.0 152.4 L243.5 149.3 L238.8 146.4 L233.8 143.8 L228.7 141.5 L223.4 139.6 L218.0 138.0 L212.5 136.8 L206.8 136.0 L201.2 135.5 L195.4 135.3 L189.7 135.6 L184.0 136.2 L178.4 137.2 L172.8 138.6 L167.3 140.3 L162.0 142.3 L156.8 144.7 L151.8 147.5 L147.1 150.6 L142.5 153.9 L138.2 157.6 L134.2 161.6 L130.5 165.8 L127.1 170.2 L124.1 174.8 L121.4 179.7 L119.1 184.7 L117.1 189.9 L115.6 195.2 L114.4 200.5 L113.7 206.0 L113.3 211.5 L113.4 217.0 L113.9 222.5 L114.8 228.0 L116.1 233.4 L117.8 238.7 L119.9 243.9 L122.4 249.0 L125.3 253.9 L128.6 258.6 L132.2 263.1 L136.1 267.3 L140.4 271.3 L144.9 275.0 L149.7 278.4 L154.8 281.5 L160.1 284.3 L165.6 286.7 L171.3 288.7 L177.1 290.4 L183.1 291.7 L189.1 292.6 L195.2 293.2 L201.4 293.3 L207.5 293.0 L213.6 292.3 L219.7 291.3 L225.7 289.8 L231.5 288.0 L237.3 285.7 L242.8 283.1 L248.2 280.2 L253.3 276.9 L258.1 273.3 L262.7 269.3 L267.0 265.1 L271.0 260.6 L274.6 255.8 L277.9 250.8 L280.7 245.6 L283.2 240.2 L285.3 234.7 L287.0 229.0 L288.2 223.2 L289.0 217.4 L289.4 211.5 L289.3 205.6 L288.7 199.7 L287.8 193.8 L286.3 188.0 L284.5 182.4 L282.2 176.8 L279.5 171.4 L276.4 166.1 L272.9 161.1 L269.1 156.3 L264.9 151.8 L260.3 147.5 L255.4 143.6 L250.3 139.9 L244.8 136.6 L239.2 133.7 L233.3 131.1 L227.2 128.9 L220.9 127.1 L214.6 125.7 L208.1 124.7 L201.6 124.2 L195.0 124.1 L188.4 124.4 L181.9 125.1 L175.4 126.3 L169.0 127.8 L162.8 129.8 L156.7 132.2 L150.8 135.0 L145.0 138.1 L139.6 141.7 L134.4 145.6 L129.5 149.8 L124.9 154.3 L120.7 159.1 L116.9 164.2 L113.4 169.5 L110.3 175.1 L107.7 180.9 L105.5 186.8 L103.7 192.8 L102.4 199.0 L101.6 205.2 L101.2 211.5 L101.3 217.8 L101.9 224.1 L102.9 230.3 L104.4 236.5 L106.4 242.6 L108.8 248.5 L111.7 254.3 L115.0 259.9 L118.7 265.2 L122.9 270.3 L127.4 275.1 L132.2 279.7 L137.4 283.9 L142.9 287.8 L148.7 291.3 L154.8 294.4 L161.1 297.1 L167.5 299.5 L174.2 301.4 L181.0 302.8 L187.9 303.9 L194.8 304.4 L201.8 304.6 L208.8 304.2 L215.8 303.5 L222.6 302.2 L229.4 300.5 L236.1 298.4 L242.6 295.9 L248.9 292.9 L254.9 289.5 L260.8 285.8 L266.3 281.6 L271.5 277.1 L276.3 272.3 L280.8 267.2 L284.9 261.8 L288.6 256.1 L291.8 250.2 L294.6 244.1 L297.0 237.8 L298.8 231.4 L300.2 224.8 L301.1 218.2 L301.5 211.5 L301.4 204.8 L300.8 198.1 L299.6 191.5 L298.0 184.9 L295.9 178.5 L293.3 172.2 L290.2 166.1 L286.7 160.2 L282.8 154.5 L278.4 149.1 L273.6 143.9 L268.4 139.1 L262.9 134.7 L257.1 130.6 L250.9 126.8 L244.5 123.5 L237.8 120.6 L230.9 118.2 L223.9 116.2 L216.7 114.6 L209.4 113.5 L202.0 112.9 L194.6 112.8 L187.2 113.2 L179.8 114.0 L172.5 115.3 L165.3 117.1 L158.2 119.3 L151.3 122.1 L144.7 125.2 L138.3 128.8 L132.1 132.8 L126.3 137.2 L120.8 141.9 L115.6 147.0 L110.9 152.5 L106.6 158.2 L102.7 164.3 L99.2 170.5 L96.3 177.0 L93.8 183.7 L91.8 190.5 L90.4 197.4 L89.4 204.4 L89.0 211.5 L89.2 218.6 L89.8 225.7 L91.0 232.7 L92.8 239.6 L95.0 246.4 L97.7 253.1 L101.0 259.6 L104.7 265.8 L108.9 271.8 L113.6 277.6 L118.6 283.0 L124.1 288.1 L130.0 292.8 L136.1 297.1 L142.7 301.0 L149.5 304.5 L156.5 307.6 L163.8 310.2 L171.2 312.3 L178.9 313.9 L186.6 315.1 L194.4 315.7 L202.2 315.8 L210.1 315.5 L217.9 314.6 L225.6 313.2 L233.2 311.3 L240.6 308.9 L247.9 306.0 L255.0 302.7 L261.7 298.9 L268.2 294.7 L274.4 290.0 L280.2 285.0 L285.6 279.6 L290.6 273.8 L295.2 267.8 L299.3 261.4 L302.9 254.8 L306.0 247.9 L308.6 240.9 L310.7 233.7 L312.2 226.4 L313.2 219.0 L313.6 211.5 L313.5 204.0 L312.8 196.6 L311.5 189.1 L309.7 181.8 L307.3 174.6 L304.4 167.6 L301.0 160.8 L297.0 154.2 L292.6 147.8 L287.7 141.8 L282.3 136.1 L276.6 130.7 L270.4 125.8 L263.8 121.2 L257.0 117.1 L249.8 113.4 L242.4 110.2 L234.7 107.4 L226.8 105.2 L218.8 103.5 L210.7 102.3 L202.4 101.6 L194.2 101.5 L185.9 101.9 L177.7 102.9 L169.6 104.4 L161.5 106.4 L153.7 108.9 L146.0 111.9 L138.6 115.4 L131.5 119.4 L124.6 123.9 L118.2 128.8 L112.0 134.1 L106.3 139.8 L101.1 145.9 L96.3 152.3 L91.9 159.0 L88.1 165.9 L84.9 173.1 L82.1 180.5 L79.9 188.1 L78.3 195.8 L77.3 203.6 L76.9 211.5 L77.1 219.4 L77.8 227.2 L79.2 235.0 L81.1 242.7 L83.6 250.3 L86.7 257.7 L90.3 264.9 L94.4 271.8 L99.1 278.5 L104.3 284.8 L109.9 290.8 L116.0 296.4 L122.5 301.7 L129.4 306.5 L136.6 310.8 L144.1 314.7 L152.0 318.1 L160.0 320.9 L168.3 323.3 L176.8 325.1 L185.3 326.3 L194.0 327.0 L202.6 327.1 L211.3 326.7 L220.0 325.7 L228.5 324.1 L236.9 322.0 L245.2 319.3 L253.2 316.2 L261.0 312.4 L268.5 308.2 L275.7 303.5 L282.5 298.4 L288.9 292.8 L294.9 286.8 L300.4 280.5 L305.5 273.7 L310.0 266.7 L314.0 259.4 L317.4 251.8 L320.3 244.0 L322.6 236.0 L324.3 227.9 L325.3 219.8 L325.8 211.5 L325.6 203.2 L324.8 195.0 L323.4 186.8 L321.4 178.7 L318.7 170.8 L315.5 163.0 L311.7 155.5 L307.3 148.2 L302.4 141.2 L297.0 134.6 L291.1 128.3 L284.7 122.4 L277.9 116.9 L270.6 111.9 L263.0 107.3 L255.1 103.2 L246.9 99.7 L238.4 96.7 L229.8 94.3 L220.9 92.4 L211.9 91.1 L202.9 90.4 L193.7 90.3 L184.6 90.7 L175.6 91.8 L166.6 93.4 L157.8 95.6 L149.1 98.4 L140.7 101.8 L132.5 105.7 L124.7 110.1 L117.2 115.0 L110.0 120.4 L103.3 126.3 L97.0 132.5 L91.2 139.2 L86.0 146.3 L81.2 153.7 L77.0 161.3 L73.4 169.3 L70.5 177.4 L68.1 185.8 L66.3 194.3 L65.2 202.9 L64.8 211.5 L65.0 220.2 L65.8 228.8 L67.3 237.4 L69.4 245.8 L72.2 254.2 L75.6 262.3 L79.6 270.2 L84.1 277.8 L89.3 285.1 L95.0 292.1 L101.2 298.7 L107.9 304.8 L115.0 310.6 L122.6 315.8 L130.5 320.6 L138.8 324.8 L147.4 328.5 L156.3 331.7 L165.4 334.2 L174.6 336.2 L184.0 337.5 L193.5 338.3 L203.1 338.4 L212.6 337.9 L222.1 336.8 L231.5 335.1 L240.7 332.7 L249.7 329.8 L258.6 326.3 L267.1 322.2 L275.3 317.6 L283.2 312.4 L290.6 306.8 L297.7 300.7 L304.2 294.1 L310.3 287.1 L315.8 279.7 L320.7 272.0 L325.1 264.0 L328.9 255.7 L332.0 247.1 L334.5 238.4 L336.3 229.5 L337.4 220.5 L337.9 211.5 L337.7 202.4 L336.8 193.4 L335.3 184.5 L333.0 175.6 L330.1 166.9 L326.6 158.4 L322.4 150.2 L317.6 142.2 L312.2 134.6 L306.3 127.3 L299.8 120.4 L292.8 114.0 L285.3 108.0 L277.4 102.5 L269.1 97.5 L260.4 93.1 L251.5 89.3 L242.2 86.0 L232.7 83.3 L223.0 81.3 L213.2 79.9 L203.3 79.1 L193.3 79.0 L183.4 79.5 L173.5 80.7 L163.7 82.5 L154.0 84.9 L144.6 88.0 L135.4 91.6 L126.5 95.9 L117.9 100.7 L109.7 106.1 L101.9 112.0 L94.6 118.4 L87.7 125.3 L81.4 132.6 L75.7 140.3 L70.5 148.4 L66.0 156.7 L62.0 165.4 L58.8 174.3 L56.2 183.4 L54.3 192.7 L53.1 202.1 L52.6 211.5 L52.8 221.0 L53.8 230.4 L55.4 239.7 L57.7 248.9 L60.8 258.0 L64.5 266.9 L68.8 275.5 L73.8 283.8 L79.5 291.7 L85.7 299.3 L92.4 306.5 L99.7 313.2 L107.5 319.4 L115.8 325.2 L124.4 330.4 L133.5 335.0 L142.9 339.0 L152.5 342.4 L162.4 345.1 L172.5 347.3 L182.8 348.7 L193.1 349.5 L203.5 349.7 L213.9 349.1 L224.2 347.9 L234.4 346.0 L244.4 343.5 L254.3 340.3 L263.9 336.4 L273.2 332.0 L282.1 326.9 L290.6 321.3 L298.8 315.2 L306.4 308.5 L313.5 301.3 L320.1 293.7 L326.1 285.7 L331.5 277.3 L336.2 268.5 L340.3 259.5 L343.7 250.2 L346.3 240.7 L348.3 231.1 L349.5 221.3 L350.1 211.5 L349.8 201.7 L348.8 191.8 L347.1 182.1 L344.7 172.5 L341.5 163.1 L337.7 153.8 L333.1 144.9 L327.9 136.3 L322.1 128.0 L315.6 120.1 L308.5 112.6 L300.9 105.6 L292.8 99.1 L284.2 93.2 L275.2 87.8 L265.8 83.0 L256.0 78.8 L245.9 75.3 L235.6 72.4 L225.1 70.2 L214.5 68.7 L203.7 67.8 L192.9 67.7 L182.1 68.3 L171.4 69.6 L160.7 71.5 L150.3 74.2 L140.0 77.5 L130.1 81.5 L120.4 86.1 L111.1 91.4 L102.2 97.2 L93.8 103.6 L85.8 110.6 L78.4 118.0 L71.6 126.0 L65.4 134.3 L59.8 143.1 L54.9 152.2 L50.6 161.6 L47.1 171.2 L44.3 181.1 L42.3 191.1 L41.0 201.3 L40.5 211.5" fill="none" stroke="#000" stroke-width="1" stroke-dasharray="5 2"/>
<line x1="248.96" y1="212.00" x2="256.90" y2="212.00" stroke="#000" stroke-width="2"/>
<line x1="44.45" y1="212.00" x2="36.51" y2="212.00" stroke="#000" stroke-width="2"/>
<rect x="662.5" y="55.5" width="350.0" height="88.0" fill="none" stroke="#000"/>
<line x1="662.50" y1="72.50" x2="1012.50" y2="72.50" stroke="#000" stroke-width="1"/>
<line x1="662.50" y1="90.50" x2="1012.50" y2="90.50" stroke="#000" stroke-width="1"/>
<line x1="662.50" y1="108.50" x2="1012.50" y2="108.50" stroke="#000" stroke-width="1"/>
<line x1="662.50" y1="125.50" x2="1012.50" y2="125.50" stroke="#000" stroke-width="1"/>
<line x1="688.50" y1="72.50" x2="688.50" y2="143.50" stroke="#000" stroke-width="1"/>
<line x1="739.50" y1="72.50" x2="739.50" y2="143.50" stroke="#000" stroke-width="1"/>
<line x1="799.50" y1="72.50" x2="799.50" y2="143.50" stroke="#000" stroke-width="1"/>
<line x1="858.50" y1="72.50" x2="858.50" y2="143.50" stroke="#000" stroke-width="1"/>
<line x1="910.50" y1="72.50" x2="910.50" y2="143.50" stroke="#000" stroke-width="1"/>
<line x1="961.50" y1="72.50" x2="961.50" y2="143.50" stroke="#000" stroke-width="1"/>
<line x1="56.50" y1="665.50" x2="373.00" y2="665.50" stroke="#000" stroke-width="1" stroke-dasharray="3 3"/>
<line x1="53.00" y1="665.50" x2="56.50" y2="665.50" stroke="#000" stroke-width="1"/>
<line x1="56.50" y1="628.50" x2="373.00" y2="628.50" stroke="#000" stroke-width="1" stroke-dasharray="3 3"/>
<line x1="53.00" y1="628.50" x2="56.50" y2="628.50" stroke="#000" stroke-width="1"/>
<line x1="56.50" y1="592.50" x2="373.00" y2="592.50" stroke="#000" stroke-width="1" stroke-dasharray="3 3"/>
<line x1="53.00" y1="592.50" x2="56.50" y2="592.50" stroke="#000" stroke-width="1"/>
<line x1="56.50" y1="555.50" x2="373.00" y2="555.50" stroke="#000" stroke-width="1" stroke-dasharray="3 3"/>
<line x1="53.00" y1="555.50" x2="56.50" y2="555.50" stroke="#000" stroke-width="1"/>
<line x1="56.50" y1="518.50" x2="373.00" y2="518.50" stroke="#000" stroke-width="1" stroke-dasharray="3 3"/>
<line x1="53.00" y1="518.50" x2="56.50" y2="518.50" stroke="#000" stroke-width="1"/>
<line x1="56.50" y1="481.50" x2="373.00" y2="481.50" stroke="#000" stroke-width="1" stroke-dasharray="3 3"/>
<line x1="53.00" y1="481.50" x2="56.50" y2="481.50" stroke="#000" stroke-width="1"/>
<line x1="56.50" y1="445.50" x2="373.00" y2="445.50" stroke="#000" stroke-width="1" stroke-dasharray="3 3"/>
<line x1="53.00" y1="445.50" x2="56.50" y2="445.50" stroke="#000" stroke-width="1"/>
<line x1="56.50" y1="408.50" x2="373.00" y2="408.50" stroke="#000" stroke-width="1" stroke-dasharray="3 3"/>
<line x1="53.00" y1="408.50" x2="56.50" y2="408.50" stroke="#000" stroke-width="1"/>
<line x1="95.50" y1="408.00" x2="95.50" y2="702.50" stroke="#000" stroke-width="1" stroke-dasharray="3 3"/>
<line x1="95.50" y1="702.50" x2="95.50" y2="705.50" stroke="#000" stroke-width="1"/>
<line x1="135.50" y1="408.00" x2="135.50" y2="702.50" stroke="#000" stroke-width="1" stroke-dasharray="3 3"/>
<line x1="135.50" y1="702.50" x2="135.50" y2="705.50" stroke="#000" stroke-width="1"/>
<line x1="174.50" y1="408.00" x2="174.50" y2="702.50" stroke="#000" stroke-width="1" stroke-dasharray="3 3"/>
<line x1="174.50" y1="702.50" x2="174.50" y2="705.50" stroke="#000" stroke-width="1"/>
<line x1="214.50" y1="408.00" x2="214.50" y2="702.50" stroke="#000" stroke-width="1" stroke-dasharray="3 3"/>
<line x1="214.50" y1="702.50" x2="214.50" y2="705.50" stroke="#000" stroke-width="1"/>
<line x1="253.50" y1="408.00" x2="253.50" y2="702.50" stroke="#000" stroke-width="1" stroke-dasharray="3 3"/>
<line x1="253.50" y1="702.50" x2="253.50" y2="705.50" stroke="#000" stroke-width="1"/>
<line x1="293.50" y1="408.00" x2="293.50" y2="702.50" stroke="#000" stroke-width="1" stroke-dasharray="3 3"/>
<line x1="293.50" y1="702.50" x2="293.50" y2="705.50" stroke="#000" stroke-width="1"/>
<line x1="332.50" y1="408.00" x2="332.50" y2="702.50" stroke="#000" stroke-width="1" stroke-dasharray="3 3"/>
<line x1="332.50" y1="702.50" x2="332.50" y2="705.50" stroke="#000" stroke-width="1"/>
<line x1="372.50" y1="408.00" x2="372.50" y2="702.50" stroke="#000" stroke-width="1" stroke-dasharray="3 3"/>
<line x1="372.50" y1="702.50" x2="372.50" y2="705.50" stroke="#000" stroke-width="1"/>
<line x1="56.50" y1="393.00" x2="56.50" y2="705.50" stroke="#000" stroke-width="1"/>
<line x1="53.00" y1="702.50" x2="388.00" y2="702.50" stroke="#000" stroke-width="1"/>
<rect x="55" y="396" width="2" height="10" fill="#000"/>
<rect x="54" y="402" width="1" height="4" fill="#000"/>
<rect x="375" y="701" width="8" height="2" fill="#000"/>
<rect x="375" y="703" width="5" height="1" fill="#000"/>
<rect x="375" y="700" width="4" height="1" fill="#000"/>
<rect x="383" y="701" width="2" height="1" fill="#000"/>
<line x1="56.5" y1="702.5" x2="334.4" y2="413.5" stroke="#000" stroke-dasharray="6 5"/>
<line x1="56.50" y1="690.50" x2="67.50" y2="690.50" stroke="#000" stroke-width="1"/>
<line x1="67.50" y1="690.50" x2="67.50" y2="702.50" stroke="#000" stroke-width="1"/>
<line x1="56.50" y1="591.50" x2="162.50" y2="591.50" stroke="#000" stroke-width="1" stroke-dasharray="18 6" stroke-dashoffset="4"/>
<line x1="162.50" y1="591.50" x2="162.50" y2="702.50" stroke="#000" stroke-width="1" stroke-dasharray="18 6" stroke-dashoffset="3"/>
<line x1="56.50" y1="413.50" x2="335.00" y2="413.50" stroke="#000" stroke-width="1" stroke-dasharray="18 6" stroke-dashoffset="4"/>
<line x1="334.50" y1="702.50" x2="334.50" y2="413.50" stroke="#000" stroke-width="1" stroke-dasharray="18 6" stroke-dashoffset="1"/>
<line x1="501.50" y1="640.50" x2="847.00" y2="640.50" stroke="#000" stroke-width="1"/>
<line x1="501.50" y1="603.50" x2="847.00" y2="603.50" stroke="#000" stroke-width="1"/>
<line x1="501.50" y1="566.50" x2="847.00" y2="566.50" stroke="#000" stroke-width="1"/>
<line x1="501.50" y1="528.50" x2="847.00" y2="528.50" stroke="#000" stroke-width="1"/>
<line x1="501.50" y1="491.50" x2="847.00" y2="491.50" stroke="#000" stroke-width="1"/>
<line x1="501.50" y1="453.50" x2="847.00" y2="453.50" stroke="#000" stroke-width="1"/>
<line x1="501.50" y1="416.50" x2="847.00" y2="416.50" stroke="#000" stroke-width="1"/>
<line x1="501.50" y1="378.50" x2="847.00" y2="378.50" stroke="#000" stroke-width="1"/>
<line x1="547.50" y1="378.00" x2="547.50" y2="681.50" stroke="#000" stroke-width="1"/>
<line x1="590.50" y1="378.00" x2="590.50" y2="681.50" stroke="#000" stroke-width="1"/>
<line x1="632.50" y1="378.00" x2="632.50" y2="681.50" stroke="#000" stroke-width="1"/>
<line x1="675.50" y1="378.00" x2="675.50" y2="681.50" stroke="#000" stroke-width="1"/>
<line x1="718.50" y1="378.00" x2="718.50" y2="681.50" stroke="#000" stroke-width="1"/>
<line x1="760.50" y1="378.00" x2="760.50" y2="681.50" stroke="#000" stroke-width="1"/>
<line x1="803.50" y1="378.00" x2="803.50" y2="681.50" stroke="#000" stroke-width="1"/>
<line x1="846.50" y1="378.00" x2="846.50" y2="681.50" stroke="#000" stroke-width="1"/>
<line x1="504.50" y1="363.00" x2="504.50" y2="681.50" stroke="#000" stroke-width="1"/>
<line x1="501.50" y1="678.50" x2="864.00" y2="678.50" stroke="#000" stroke-width="1"/>
<rect x="503" y="366" width="2" height="10" fill="#000"/>
<rect x="505" y="372" width="1" height="4" fill="#000"/>
<rect x="849" y="677" width="8" height="2" fill="#000"/>
<rect x="849" y="680" width="4" height="1" fill="#000"/>
<rect x="857" y="678" width="3" height="2" fill="#000"/>
<line x1="504.5" y1="678.5" x2="846.5" y2="378.5" stroke="#000"/>
<line x1="504.50" y1="423.50" x2="797.00" y2="423.50" stroke="#000" stroke-width="1"/>
<line x1="504.5" y1="481" x2="599.5" y2="423.5" stroke="#000"/>
<line x1="504.5" y1="431" x2="519" y2="423.5" stroke="#000"/>
<line x1="517.50" y1="582.00" x2="517.50" y2="667.00" stroke="#000" stroke-width="1"/>
<circle cx="516.5" cy="580.6" r="2.2" fill="#fff" stroke="#000" class="aa"/>
<circle cx="516.5" cy="667.5" r="2.2" fill="none" stroke="#000" class="aa"/>
</svg>
<div id="tx">
<div class="t " style="left:11.00px;top:43.67px;font-size:14.5px;line-height:20px;white-space:pre;">Spiral Spring  001</div>
<div class="t " style="left:473.00px;top:55.63px;font-size:11px;line-height:15px;transform:scaleX(1.11);white-space:pre;">t x b: 2 x 2  (r= 0.5)</div>
<div class="t " style="left:473.00px;top:69.77px;font-size:11px;line-height:15px;transform:scaleX(1.11);white-space:pre;">n : 8.5</div>
<div class="t " style="left:473.00px;top:83.91px;font-size:11px;line-height:15px;transform:scaleX(1.11);white-space:pre;">ri : 18 mm</div>
<div class="t " style="left:473.00px;top:98.05px;font-size:11px;line-height:15px;transform:scaleX(1.11);white-space:pre;">re : 52 mm</div>
<div class="t " style="left:473.00px;top:112.19px;font-size:11px;line-height:15px;transform:scaleX(1.11);white-space:pre;">cT : 2.235 Nmm/°</div>
<div class="t " style="left:473.00px;top:126.33px;font-size:11px;line-height:15px;transform:scaleX(1.11);white-space:pre;">kb : 1</div>
<div class="t " style="left:473.00px;top:140.47px;font-size:11px;line-height:15px;transform:scaleX(1.11);white-space:pre;">Lw : 1869 mm</div>
<div class="t " style="left:473.00px;top:154.61px;font-size:11px;line-height:15px;transform:scaleX(1.11);white-space:pre;">m : 55.55 g</div>
<div class="t " style="left:473.00px;top:168.75px;font-size:11px;line-height:15px;transform:scaleX(1.11);white-space:pre;">stress : static</div>
<div class="t " style="left:473.00px;top:197.03px;font-size:11px;line-height:15px;transform:scaleX(1.11);white-space:pre;">error messages</div>
<div class="t " style="left:473.00px;top:211.17px;font-size:11px;line-height:15px;transform:scaleX(1.11);white-space:pre;">Warning: approx.Goodman</div>
<div class="t " style="left:473.00px;top:225.31px;font-size:11px;line-height:15px;transform:scaleX(1.11);white-space:pre;">Warning: d&lt;dmin (14.5)</div>
<div class="t " style="left:473.00px;top:239.45px;font-size:11px;line-height:15px;transform:scaleX(1.11);white-space:pre;">Warning: Sig.c&gt;Sig.perm !</div>
<div class="t " style="left:665.00px;top:56.43px;font-size:11px;line-height:15px;transform:scaleX(1.11);">i</div>
<div class="t " style="left:694.00px;top:56.43px;font-size:11px;line-height:15px;transform:scaleX(1.11);">delta [°]</div>
<div class="t " style="left:745.00px;top:56.43px;font-size:11px;line-height:15px;transform:scaleX(1.11);">T [Nmm]</div>
<div class="t " style="left:802.00px;top:56.43px;font-size:11px;line-height:15px;transform:scaleX(1.11);">sig.[MPa]</div>
<div class="t " style="left:864.50px;top:56.43px;font-size:11px;line-height:15px;transform:scaleX(1.11);">alpha[°]</div>
<div class="t " style="left:919.00px;top:56.43px;font-size:11px;line-height:15px;transform:scaleX(1.11);">a [mm]</div>
<div class="t " style="left:973.00px;top:56.43px;font-size:11px;line-height:15px;transform:scaleX(1.11);">n</div>
<div class="t " style="left:665.00px;top:74.23px;font-size:11px;line-height:15px;transform:scaleX(1.11);">0</div>
<div class="t " style="left:697.00px;top:74.23px;font-size:11px;line-height:15px;transform:scaleX(1.11);">180.0</div>
<div class="t " style="left:757.00px;top:74.23px;font-size:11px;line-height:15px;transform:scaleX(1.11);">0.0</div>
<div class="t " style="left:810.00px;top:74.23px;font-size:11px;line-height:15px;transform:scaleX(1.11);">0</div>
<div class="t " style="left:872.00px;top:74.23px;font-size:11px;line-height:15px;transform:scaleX(1.11);">0.0</div>
<div class="t " style="left:921.00px;top:74.23px;font-size:11px;line-height:15px;transform:scaleX(1.11);">2.00</div>
<div class="t " style="left:972.00px;top:74.23px;font-size:11px;line-height:15px;transform:scaleX(1.11);">8.500</div>
<div class="t " style="left:665.00px;top:92.23px;font-size:11px;line-height:15px;transform:scaleX(1.11);">1</div>
<div class="t " style="left:697.00px;top:92.23px;font-size:11px;line-height:15px;transform:scaleX(1.11);">150.0</div>
<div class="t " style="left:753.00px;top:92.23px;font-size:11px;line-height:15px;transform:scaleX(1.11);">67.0</div>
<div class="t " style="left:808.00px;top:92.23px;font-size:11px;line-height:15px;transform:scaleX(1.11);">58</div>
<div class="t " style="left:870.00px;top:92.23px;font-size:11px;line-height:15px;transform:scaleX(1.11);">30.0</div>
<div class="t " style="left:921.00px;top:92.23px;font-size:11px;line-height:15px;transform:scaleX(1.11);">1.88</div>
<div class="t " style="left:972.00px;top:92.23px;font-size:11px;line-height:15px;transform:scaleX(1.11);">8.583</div>
<div class="t " style="left:665.00px;top:109.33px;font-size:11px;line-height:15px;transform:scaleX(1.11);">2</div>
<div class="t " style="left:697.00px;top:109.33px;font-size:11px;line-height:15px;transform:scaleX(1.11);">-90.0</div>
<div class="t " style="left:751.00px;top:109.33px;font-size:11px;line-height:15px;transform:scaleX(1.11);">603.4</div>
<div class="t " style="left:805.00px;top:109.33px;font-size:11px;line-height:15px;transform:scaleX(1.11);">519</div>
<div class="t " style="left:867.00px;top:109.33px;font-size:11px;line-height:15px;transform:scaleX(1.11);">270.0</div>
<div class="t " style="left:921.00px;top:109.33px;font-size:11px;line-height:15px;transform:scaleX(1.11);">1.06</div>
<div class="t " style="left:972.00px;top:109.33px;font-size:11px;line-height:15px;transform:scaleX(1.11);">9.250</div>
<div class="t " style="left:665.00px;top:127.23px;font-size:11px;line-height:15px;transform:scaleX(1.11);">c</div>
<div class="t " style="left:694.00px;top:127.23px;font-size:11px;line-height:15px;transform:scaleX(1.11);">-523.8</div>
<div class="t " style="left:748.00px;top:127.23px;font-size:11px;line-height:15px;transform:scaleX(1.11);">1572.9</div>
<div class="t " style="left:802.00px;top:127.23px;font-size:11px;line-height:15px;transform:scaleX(1.11);">1354</div>
<div class="t " style="left:868.00px;top:127.23px;font-size:11px;line-height:15px;transform:scaleX(1.11);">703.8</div>
<div class="t " style="left:921.00px;top:127.23px;font-size:11px;line-height:15px;transform:scaleX(1.11);">0.00</div>
<div class="t " style="left:967.00px;top:127.23px;font-size:11px;line-height:15px;transform:scaleX(1.11);">10.455</div>
<div class="t " style="left:790.00px;top:149.63px;font-size:11px;line-height:15px;transform:scaleX(1.11);">sig.perm: 1163</div>
<div class="t sm" style="left:24.00px;top:378.10px;font-size:9px;line-height:13px;transform:scaleX(0.95);letter-spacing:0.35px;white-space:pre;">T  [Nmm]</div>
<div class="t " style="left:88.50px;top:376.17px;font-size:14.5px;line-height:20px;">Char.Line</div>
<div class="t sm" style="left:24.50px;top:695.60px;font-size:9px;line-height:13px;transform:scaleX(0.95);">0</div>
<div class="t sm" style="left:24.50px;top:658.60px;font-size:9px;line-height:13px;transform:scaleX(0.95);">200</div>
<div class="t sm" style="left:24.50px;top:621.60px;font-size:9px;line-height:13px;transform:scaleX(0.95);">400</div>
<div class="t sm" style="left:24.50px;top:585.60px;font-size:9px;line-height:13px;transform:scaleX(0.95);">600</div>
<div class="t sm" style="left:24.50px;top:548.60px;font-size:9px;line-height:13px;transform:scaleX(0.95);">800</div>
<div class="t sm" style="left:24.50px;top:511.60px;font-size:9px;line-height:13px;transform:scaleX(0.95);">1000</div>
<div class="t sm" style="left:24.50px;top:474.60px;font-size:9px;line-height:13px;transform:scaleX(0.95);">1200</div>
<div class="t sm" style="left:24.50px;top:438.60px;font-size:9px;line-height:13px;transform:scaleX(0.95);">1400</div>
<div class="t sm" style="left:24.50px;top:401.60px;font-size:9px;line-height:13px;transform:scaleX(0.95);">1600</div>
<div class="t sm" style="left:45.50px;top:712.60px;font-size:9px;line-height:13px;transform:scaleX(0.95);">0</div>
<div class="t sm" style="left:86.00px;top:712.60px;font-size:9px;line-height:13px;transform:scaleX(0.95);">100</div>
<div class="t sm" style="left:125.30px;top:712.60px;font-size:9px;line-height:13px;transform:scaleX(0.95);">200</div>
<div class="t sm" style="left:165.00px;top:712.60px;font-size:9px;line-height:13px;transform:scaleX(0.95);">300</div>
<div class="t sm" style="left:204.00px;top:712.60px;font-size:9px;line-height:13px;transform:scaleX(0.95);">400</div>
<div class="t sm" style="left:244.00px;top:712.60px;font-size:9px;line-height:13px;transform:scaleX(0.95);">500</div>
<div class="t sm" style="left:283.00px;top:712.60px;font-size:9px;line-height:13px;transform:scaleX(0.95);">600</div>
<div class="t sm" style="left:322.00px;top:712.60px;font-size:9px;line-height:13px;transform:scaleX(0.95);">700</div>
<div class="t sm" style="left:362.00px;top:712.60px;font-size:9px;line-height:13px;transform:scaleX(0.95);">800</div>
<div class="t sm" style="left:393.00px;top:712.60px;font-size:9px;line-height:13px;transform:scaleX(0.95);">alpha [°]</div>
<div class="t " style="left:67.30px;top:673.44px;font-size:12.5px;line-height:18px;transform:scaleX(1.15);letter-spacing:1.2px;">T1</div>
<div class="t " style="left:83.40px;top:575.74px;font-size:12.5px;line-height:18px;transform:scaleX(1.15);letter-spacing:1.2px;">T2</div>
<div class="t " style="left:195.50px;top:396.34px;font-size:12.5px;line-height:18px;transform:scaleX(1.15);letter-spacing:1.2px;">Tc</div>
<div class="t sm" style="left:470.00px;top:348.40px;font-size:9px;line-height:13px;transform:scaleX(0.95);white-space:pre;">sigma  o</div>
<div class="t " style="left:575.50px;top:354.17px;font-size:14.5px;line-height:20px;">Goodman diagram</div>
<div class="t sm" style="left:470.00px;top:672.40px;font-size:9px;line-height:13px;transform:scaleX(0.95);">0</div>
<div class="t sm" style="left:470.00px;top:634.40px;font-size:9px;line-height:13px;transform:scaleX(0.95);">200</div>
<div class="t sm" style="left:470.00px;top:597.40px;font-size:9px;line-height:13px;transform:scaleX(0.95);">400</div>
<div class="t sm" style="left:470.00px;top:560.40px;font-size:9px;line-height:13px;transform:scaleX(0.95);">600</div>
<div class="t sm" style="left:470.00px;top:522.40px;font-size:9px;line-height:13px;transform:scaleX(0.95);">800</div>
<div class="t sm" style="left:470.00px;top:485.40px;font-size:9px;line-height:13px;transform:scaleX(0.95);">1000</div>
<div class="t sm" style="left:470.00px;top:447.40px;font-size:9px;line-height:13px;transform:scaleX(0.95);">1200</div>
<div class="t sm" style="left:470.00px;top:410.40px;font-size:9px;line-height:13px;transform:scaleX(0.95);">1400</div>
<div class="t sm" style="left:470.00px;top:372.40px;font-size:9px;line-height:13px;transform:scaleX(0.95);">1600</div>
<div class="t sm" style="left:494.00px;top:689.60px;font-size:9px;line-height:13px;transform:scaleX(0.95);">0</div>
<div class="t sm" style="left:537.00px;top:689.60px;font-size:9px;line-height:13px;transform:scaleX(0.95);">200</div>
<div class="t sm" style="left:579.00px;top:689.60px;font-size:9px;line-height:13px;transform:scaleX(0.95);">400</div>
<div class="t sm" style="left:622.00px;top:689.60px;font-size:9px;line-height:13px;transform:scaleX(0.95);">600</div>
<div class="t sm" style="left:665.00px;top:689.60px;font-size:9px;line-height:13px;transform:scaleX(0.95);">800</div>
<div class="t sm" style="left:705.50px;top:689.60px;font-size:9px;line-height:13px;transform:scaleX(0.95);">1000</div>
<div class="t sm" style="left:750.50px;top:689.60px;font-size:9px;line-height:13px;transform:scaleX(0.95);">1200</div>
<div class="t sm" style="left:793.50px;top:689.60px;font-size:9px;line-height:13px;transform:scaleX(0.95);">1400</div>
<div class="t sm" style="left:835.50px;top:689.60px;font-size:9px;line-height:13px;transform:scaleX(0.95);">1600</div>
<div class="t sm" style="left:866.00px;top:689.60px;font-size:9px;line-height:13px;transform:scaleX(0.95);letter-spacing:0.2px;white-space:pre;">sigma u  [MPa]</div>
<div class="t sm" style="left:504.00px;top:409.60px;font-size:9px;line-height:13px;transform:scaleX(0.95);">100000 lc.</div>
<div class="t sm" style="left:524.00px;top:409.60px;font-size:9px;line-height:13px;transform:scaleX(0.95);">mill.</div>
<div class="t sm" style="left:611.00px;top:409.60px;font-size:9px;line-height:13px;transform:scaleX(0.95);letter-spacing:0.3px;">10 mill.cycl.</div>
<div class="t sm" style="left:524.50px;top:571.60px;font-size:9px;line-height:13px;transform:scaleX(0.95);">sigma2</div>
<div class="t sm" style="left:524.50px;top:657.60px;font-size:9px;line-height:13px;transform:scaleX(0.95);">sigma1</div>
<div class="t " style="left:883.00px;top:385.83px;font-size:11px;line-height:15px;transform:scaleX(1.11);white-space:pre;">sig.q1=   58 MPa</div>
<div class="t " style="left:883.00px;top:399.93px;font-size:11px;line-height:15px;transform:scaleX(1.11);white-space:pre;">sig.q2=  519 MPa</div>
<div class="t " style="left:883.00px;top:414.03px;font-size:11px;line-height:15px;transform:scaleX(1.11);white-space:pre;">sig.h =  462 MPa</div>
<div class="t " style="left:883.00px;top:442.23px;font-size:11px;line-height:15px;transform:scaleX(1.11);white-space:pre;">E = 206000 MPa</div>
<div class="t " style="left:883.00px;top:456.33px;font-size:11px;line-height:15px;transform:scaleX(1.11);white-space:pre;">rho =  7.85 kg/dm3</div>
<div class="t " style="left:883.00px;top:470.43px;font-size:11px;line-height:15px;transform:scaleX(1.11);white-space:pre;">Rm = 1550 MPa</div>
<div class="t " style="left:883.00px;top:484.53px;font-size:11px;line-height:15px;transform:scaleX(1.11);white-space:pre;">sig.z= 1163 MPa</div>
<div class="t " style="left:883.00px;top:498.63px;font-size:11px;line-height:15px;transform:scaleX(1.11);white-space:pre;">sig.oz= 1362 MPa</div>
<div class="t " style="left:883.00px;top:512.73px;font-size:11px;line-height:15px;transform:scaleX(1.11);white-space:pre;">sig.hz= 1037 MPa</div>
<div class="t " style="left:883.00px;top:540.93px;font-size:11px;line-height:15px;transform:scaleX(1.11);white-space:pre;">T =  20 °C</div>
<div class="t " style="left:883.00px;top:555.03px;font-size:11px;line-height:15px;transform:scaleX(1.11);white-space:pre;">E20 = 206000 MPa</div>
<div class="t " style="left:883.00px;top:583.23px;font-size:11px;line-height:15px;transform:scaleX(1.11);white-space:pre;">b  = 2 mm</div>
<div class="t " style="left:883.00px;top:597.33px;font-size:11px;line-height:15px;transform:scaleX(1.11);white-space:pre;">t  = 2 mm</div>
<div class="t " style="left:470.50px;top:711.63px;font-size:11px;line-height:15px;transform:scaleX(1.11);">Fatigue strength chart (Goodman Diagram)</div>
<div class="t " style="left:470.50px;top:724.13px;font-size:11px;line-height:15px;transform:scaleX(1.11);">EN 10089 61SiCr7 (DIN 17221 60SiCr7) not shot-blasted</div>
<div class="t ft" style="left:10.30px;top:741.88px;font-size:6.6px;line-height:9px;transform:scaleX(1.3);">18.12.2009 7:57 - HEXAGON FED9 V4.1 #0065 - FEDERNFABRIK KALTBRUNN - C:\VOL3\APPS\TP\TRAIN0.fd9</div>
</div>
</body></html>
